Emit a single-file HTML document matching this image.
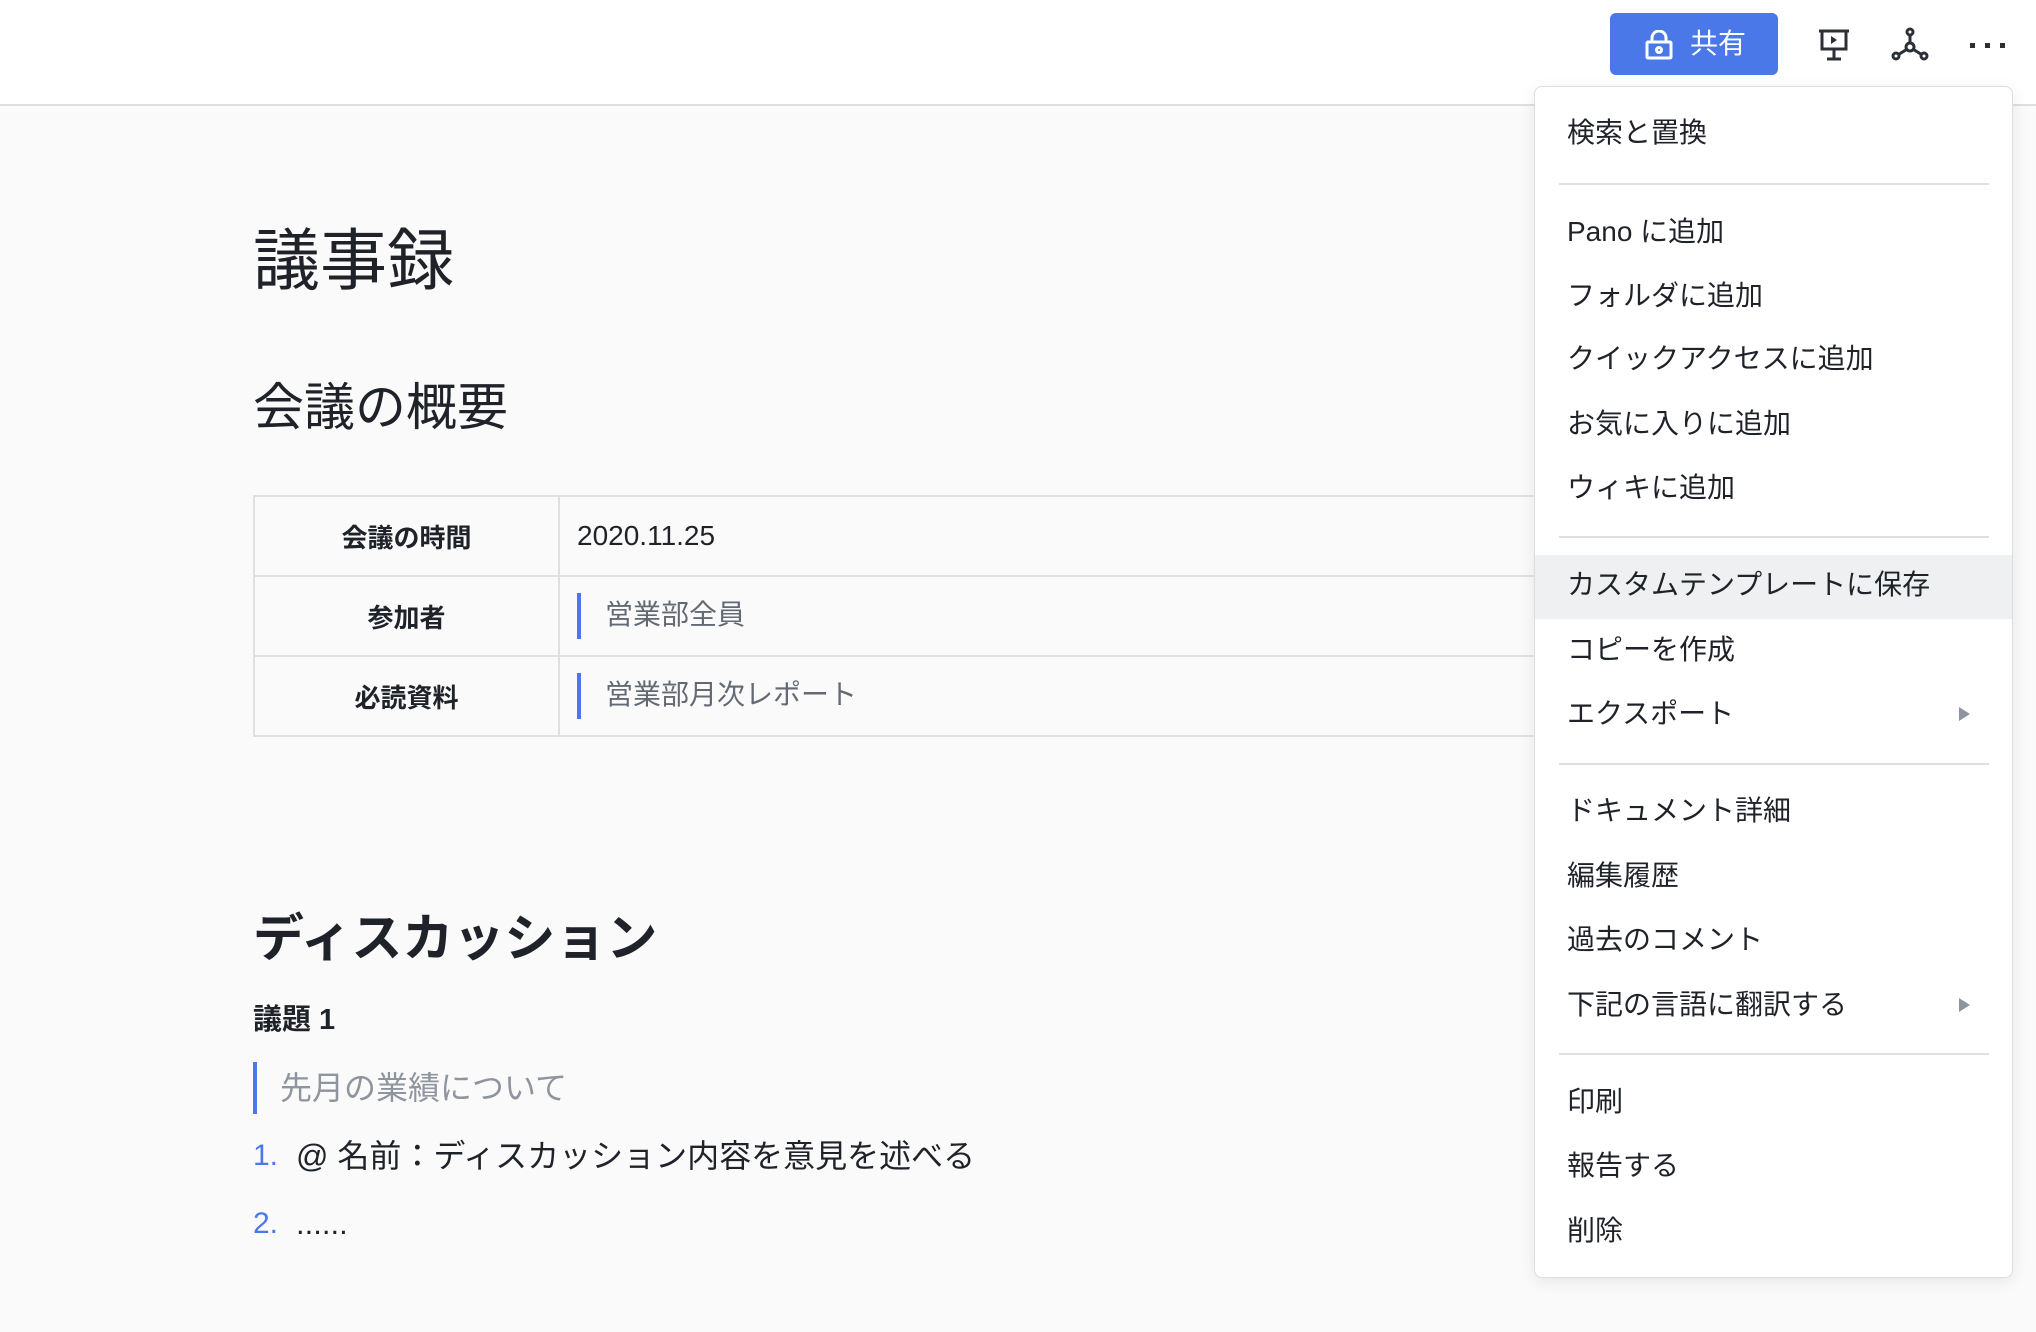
<!DOCTYPE html>
<html><head><meta charset="utf-8"><style>
*{margin:0;padding:0;box-sizing:border-box}
body{width:2036px;height:1332px;overflow:hidden;background:#fafafa;font-family:"Liberation Sans","Noto Sans CJK JP",sans-serif;color:#1f2329;position:relative}
.top{position:absolute;left:0;top:0;width:2036px;height:106px;background:#fff;border-bottom:2px solid #dedfe1}
.a{position:absolute;white-space:nowrap;line-height:1}
.share{position:absolute;left:1610px;top:13px;width:168px;height:62px;background:#4a78e8;border-radius:6px;color:#fff;font-size:28px}
.menu{position:absolute;left:1534px;top:86px;width:479px;height:1192px;background:#fff;border:1px solid #dcdde0;border-radius:8px;box-shadow:0 4px 16px rgba(0,0,0,.08)}
.mi{position:absolute;left:32px;font-size:28px;line-height:1;color:#1f2329;white-space:nowrap}
.sep{position:absolute;left:24px;width:430px;height:2px;background:#dee0e3}
.arr{position:absolute;left:424px;width:0;height:0;border-left:11px solid #8f959e;border-top:7px solid transparent;border-bottom:7px solid transparent}
table{position:absolute;left:253px;top:495px;border-collapse:collapse;width:1300px}
td{border:2px solid #dee0e3;height:80px;font-size:28px;vertical-align:middle}
td.l{width:305px;text-align:center;font-weight:bold;font-size:26px}
td.v{padding-left:17px}
.bar{display:inline-block;width:4px;height:46px;background:#4a78e8;vertical-align:middle;margin-right:24px}
</style></head><body>
<div class="top"></div>
<div class="share">
<svg style="position:absolute;left:34px;top:17px" width="30" height="30" viewBox="0 0 30 30" fill="none" stroke="#fff" stroke-width="3"><rect x="3" y="12" width="24" height="16" rx="1"/><path d="M8 12V8a7 7 0 0 1 14 0v4"/><circle cx="15" cy="20" r="2.5"/></svg>
<span class="a" style="left:80px;top:17px">共有</span></div>
<svg style="position:absolute;left:1817px;top:28px" width="34" height="34" viewBox="0 0 34 34" fill="none" stroke="#2b2f36" stroke-width="3"><path d="M2 3h30M5 3v18h24V3M17 21v9M10 31h14"/><path d="M14 8l6 4-6 4z" fill="#2b2f36" stroke="none"/></svg>
<svg style="position:absolute;left:1891px;top:27px" width="38" height="36" viewBox="0 0 38 36" fill="none" stroke="#2b2f36" stroke-width="3"><circle cx="19" cy="5" r="3"/><circle cx="19" cy="20" r="4"/><circle cx="5" cy="29" r="3"/><circle cx="33" cy="29" r="3"/><path d="M19 8v8M15.5 22.5L7.5 27.5M22.5 22.5l8 5"/></svg>
<div style="position:absolute;left:1970px;top:43px;width:36px;height:6px">
<i style="position:absolute;left:0;width:5px;height:5px;background:#2b2f36"></i><i style="position:absolute;left:15px;width:5px;height:5px;background:#2b2f36"></i><i style="position:absolute;left:30px;width:5px;height:5px;background:#2b2f36"></i></div>

<div class="a" style="left:253px;top:228px;font-size:67px">議事録</div>
<div class="a" style="left:253px;top:382px;font-size:51px">会議の概要</div>
<table>
<tr><td class="l">会議の時間</td><td class="v">2020.11.25</td></tr>
<tr><td class="l">参加者</td><td class="v"><span class="bar"></span><span style="color:#646a73">営業部全員</span></td></tr>
<tr><td class="l">必読資料</td><td class="v"><span class="bar"></span><span style="color:#646a73">営業部月次レポート</span></td></tr>
</table>
<div class="a" style="left:253px;top:913px;font-size:51px;font-weight:bold">ディスカッション</div>
<div class="a" style="left:253px;top:1006px;font-size:29px;font-weight:bold">議題 1</div>
<div style="position:absolute;left:253px;top:1062px;width:4px;height:52px;background:#4a78e8"></div>
<div class="a" style="left:280px;top:1072px;font-size:32px;color:#8f959e">先月の業績について</div>
<div class="a" style="left:253px;top:1141px;font-size:30px;color:#4a78e8">1.</div>
<div class="a" style="left:296px;top:1140px;font-size:32px">@ 名前：ディスカッション内容を意見を述べる</div>
<div class="a" style="left:253px;top:1209px;font-size:30px;color:#4a78e8">2.</div>
<div class="a" style="left:296px;top:1208px;font-size:31px">......</div>

<div class="menu">
<div class="mi" style="top:32px">検索と置換</div>
<div class="sep" style="top:96px"></div>
<div class="mi" style="top:131px">Pano に追加</div>
<div class="mi" style="top:195px">フォルダに追加</div>
<div class="mi" style="top:258px">クイックアクセスに追加</div>
<div class="mi" style="top:323px">お気に入りに追加</div>
<div class="mi" style="top:387px">ウィキに追加</div>
<div class="sep" style="top:449px"></div>
<div style="position:absolute;left:0;top:468px;width:477px;height:64px;background:#eff0f1"></div>
<div class="mi" style="top:484px">カスタムテンプレートに保存</div>
<div class="mi" style="top:549px">コピーを作成</div>
<div class="mi" style="top:613px">エクスポート</div>
<div class="arr" style="top:620px"></div>
<div class="sep" style="top:676px"></div>
<div class="mi" style="top:710px">ドキュメント詳細</div>
<div class="mi" style="top:775px">編集履歴</div>
<div class="mi" style="top:839px">過去のコメント</div>
<div class="mi" style="top:904px">下記の言語に翻訳する</div>
<div class="arr" style="top:911px"></div>
<div class="sep" style="top:966px"></div>
<div class="mi" style="top:1001px">印刷</div>
<div class="mi" style="top:1065px">報告する</div>
<div class="mi" style="top:1130px">削除</div>
</div>
</body></html>
